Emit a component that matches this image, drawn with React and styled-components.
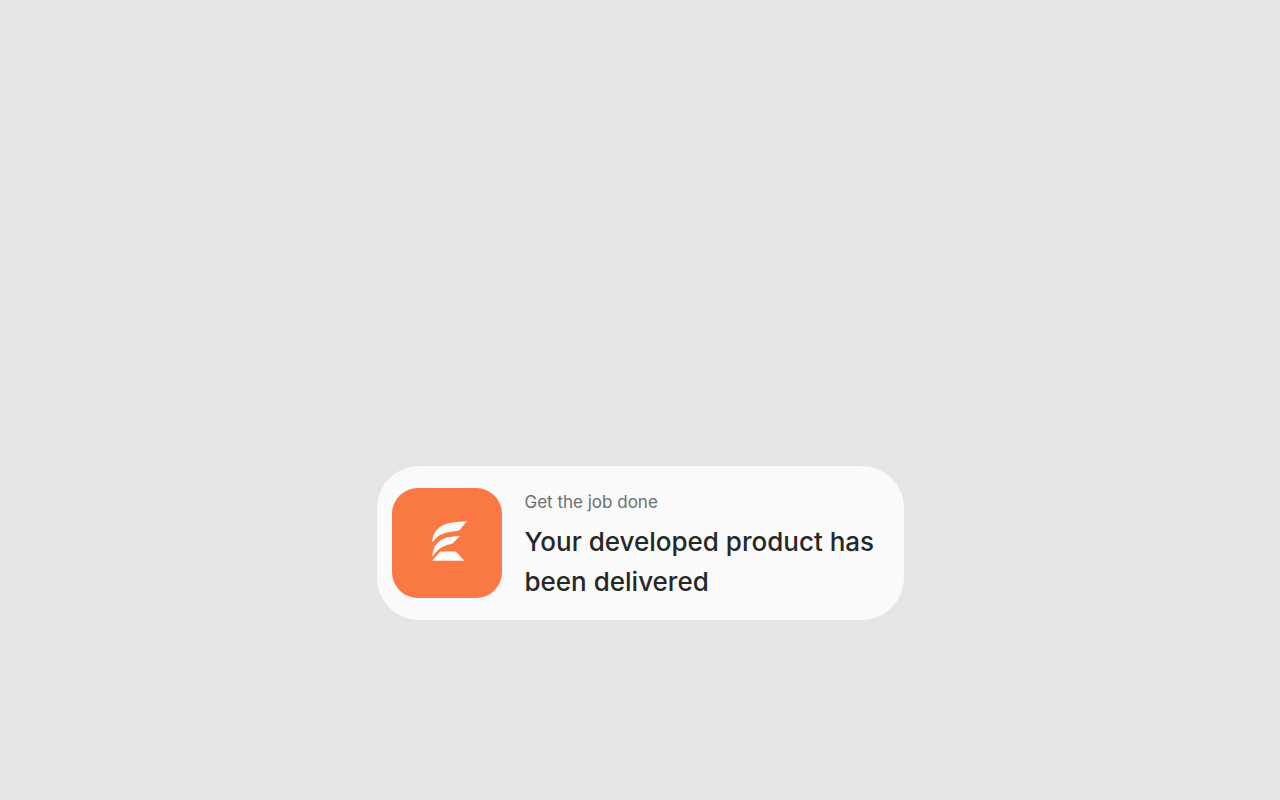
import React from "react";
import styled, { createGlobalStyle } from "styled-components";

const GlobalStyle = createGlobalStyle`
  * {
    box-sizing: border-box;
  }

  body {
    margin: 0;
    background-color: #e5e5e3;
    font-family: Inter, "Liberation Sans", sans-serif;
  }
`;

const Page = styled.main`
  display: flex;
  justify-content: center;
  align-items: flex-end;
  min-height: 100vh;
  padding: 24px 16px 180px;
`;

const Card = styled.article`
  display: flex;
  align-items: center;
  gap: 23px;
  width: 100%;
  max-width: 527px;
  padding: 16px 15px;
  border-radius: 42px;
  background-color: #fafafa;
`;

const LogoTile = styled.div`
  display: flex;
  flex-shrink: 0;
  justify-content: center;
  align-items: center;
  width: 110px;
  height: 110px;
  border-radius: 26px;
  background-color: #fa7843;
`;

const Message = styled.div`
  flex: 1;
  min-width: 0;
  padding-bottom: 2px;
`;

const Caption = styled.p`
  margin: 0;
  color: #6d6e70;
  font-size: 17px;
  line-height: 40px;
`;

const Title = styled.h1`
  margin: 0;
  color: #262828;
  font-size: 26px;
  font-weight: 500;
  line-height: 40px;
`;

const Logo = () => (
  <svg width="40" height="44" viewBox="0 0 40 44" fill="#fdfaf7" aria-hidden="true">
    <path d="M40 .3C30 .9 22 1.6 17 3.8C10 7 5.6 12.5 5.2 20.8H6.2C9.5 15.8 13.5 13.2 20 11.6C24 10.7 28 10.2 32.2 9.4Z" />
    <path d="M33 15C25 15.3 18.5 16.2 14 19C8.5 22.5 5.8 27.5 5.4 35.8C9.2 30.2 13 26.4 18 24.7C21 23.8 23.5 23.2 25.6 22.5Z" />
    <path d="M13.4 30.4H28.8L37.4 39.8H5.6V39Z" />
  </svg>
);

function App() {
  return (
    <>
      <GlobalStyle />
      <Page>
        <Card>
          <LogoTile>
            <Logo />
          </LogoTile>
          <Message>
            <Caption>Get the job done</Caption>
            <Title>Your developed product has been delivered</Title>
          </Message>
        </Card>
      </Page>
    </>
  );
}

export default App;
